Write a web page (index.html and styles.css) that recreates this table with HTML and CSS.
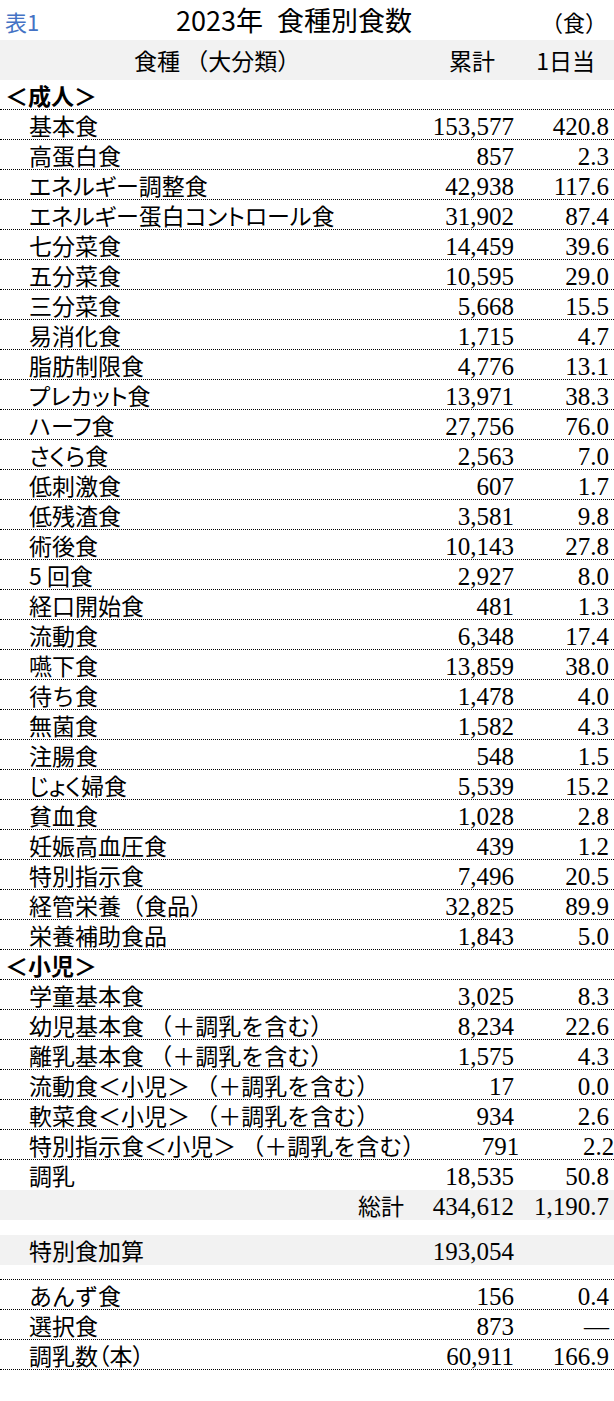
FILE: index.html
```html
<!DOCTYPE html>
<html lang="ja">
<head>
<meta charset="utf-8">
<title>2023年 食種別食数</title>
<link rel="stylesheet" href="styles.css">
</head>
<body>
<div class="sheet">
  <div class="titlebar">
    <span class="tag">表1</span>
    <span class="title">2023年 食種別食数</span>
    <span class="unit">（食）</span>
  </div>

  <div class="row head">
    <div class="name">食種 （大分類）</div>
    <div class="num h1">累計</div>
    <div class="num h2">1日当</div>
  </div>

  <div class="row cat"><div class="name">＜成人＞</div><div class="num"></div><div class="num"></div></div>
  <div class="row item"><div class="name">基本食</div><div class="num">153,577</div><div class="num">420.8</div></div>
  <div class="row item"><div class="name">高蛋白食</div><div class="num">857</div><div class="num">2.3</div></div>
  <div class="row item"><div class="name prop">エネルギー調整食</div><div class="num">42,938</div><div class="num">117.6</div></div>
  <div class="row item"><div class="name prop">エネルギー蛋白コントロール食</div><div class="num">31,902</div><div class="num">87.4</div></div>
  <div class="row item"><div class="name">七分菜食</div><div class="num">14,459</div><div class="num">39.6</div></div>
  <div class="row item"><div class="name">五分菜食</div><div class="num">10,595</div><div class="num">29.0</div></div>
  <div class="row item"><div class="name">三分菜食</div><div class="num">5,668</div><div class="num">15.5</div></div>
  <div class="row item"><div class="name">易消化食</div><div class="num">1,715</div><div class="num">4.7</div></div>
  <div class="row item"><div class="name">脂肪制限食</div><div class="num">4,776</div><div class="num">13.1</div></div>
  <div class="row item"><div class="name prop">プレカット食</div><div class="num">13,971</div><div class="num">38.3</div></div>
  <div class="row item"><div class="name prop">ハーフ食</div><div class="num">27,756</div><div class="num">76.0</div></div>
  <div class="row item"><div class="name prop">さくら食</div><div class="num">2,563</div><div class="num">7.0</div></div>
  <div class="row item"><div class="name">低刺激食</div><div class="num">607</div><div class="num">1.7</div></div>
  <div class="row item"><div class="name">低残渣食</div><div class="num">3,581</div><div class="num">9.8</div></div>
  <div class="row item"><div class="name">術後食</div><div class="num">10,143</div><div class="num">27.8</div></div>
  <div class="row item"><div class="name">5 回食</div><div class="num">2,927</div><div class="num">8.0</div></div>
  <div class="row item"><div class="name">経口開始食</div><div class="num">481</div><div class="num">1.3</div></div>
  <div class="row item"><div class="name">流動食</div><div class="num">6,348</div><div class="num">17.4</div></div>
  <div class="row item"><div class="name">嚥下食</div><div class="num">13,859</div><div class="num">38.0</div></div>
  <div class="row item"><div class="name">待ち食</div><div class="num">1,478</div><div class="num">4.0</div></div>
  <div class="row item"><div class="name">無菌食</div><div class="num">1,582</div><div class="num">4.3</div></div>
  <div class="row item"><div class="name">注腸食</div><div class="num">548</div><div class="num">1.5</div></div>
  <div class="row item"><div class="name prop">じょく婦食</div><div class="num">5,539</div><div class="num">15.2</div></div>
  <div class="row item"><div class="name">貧血食</div><div class="num">1,028</div><div class="num">2.8</div></div>
  <div class="row item"><div class="name">妊娠高血圧食</div><div class="num">439</div><div class="num">1.2</div></div>
  <div class="row item"><div class="name">特別指示食</div><div class="num">7,496</div><div class="num">20.5</div></div>
  <div class="row item"><div class="name">経管栄養（食品）</div><div class="num">32,825</div><div class="num">89.9</div></div>
  <div class="row item"><div class="name">栄養補助食品</div><div class="num">1,843</div><div class="num">5.0</div></div>

  <div class="row cat"><div class="name">＜小児＞</div><div class="num"></div><div class="num"></div></div>
  <div class="row item"><div class="name">学童基本食</div><div class="num">3,025</div><div class="num">8.3</div></div>
  <div class="row item"><div class="name">幼児基本食 （＋調乳を含む）</div><div class="num">8,234</div><div class="num">22.6</div></div>
  <div class="row item"><div class="name">離乳基本食 （＋調乳を含む）</div><div class="num">1,575</div><div class="num">4.3</div></div>
  <div class="row item"><div class="name">流動食＜小児＞ （＋調乳を含む）</div><div class="num">17</div><div class="num">0.0</div></div>
  <div class="row item"><div class="name">軟菜食＜小児＞ （＋調乳を含む）</div><div class="num">934</div><div class="num">2.6</div></div>
  <div class="row item"><div class="name">特別指示食＜小児＞ （＋調乳を含む）</div><div class="num">791</div><div class="num">2.2</div></div>
  <div class="row item last"><div class="name">調乳</div><div class="num">18,535</div><div class="num">50.8</div></div>

  <div class="row band total"><div class="name">総計</div><div class="num">434,612</div><div class="num">1,190.7</div></div>
  <div class="gap"></div>
  <div class="row band"><div class="name">特別食加算</div><div class="num">193,054</div><div class="num"></div></div>
  <div class="gap dotted"></div>
  <div class="row item"><div class="name">あんず食</div><div class="num">156</div><div class="num">0.4</div></div>
  <div class="row item"><div class="name">選択食</div><div class="num">873</div><div class="num">—</div></div>
  <div class="row item"><div class="name prop">調乳数（本）</div><div class="num">60,911</div><div class="num">166.9</div></div>
</div>
</body>
</html>
```

FILE: styles.css
```css
html, body {
  margin: 0;
  padding: 0;
  background: #ffffff;
}

body {
  font-family: "Noto Sans CJK JP", "Noto Sans", sans-serif;
  color: #000;
}

.sheet {
  width: 614px;
}

.titlebar {
  display: grid;
  grid-template-columns: 176px 1fr auto;
  align-items: baseline;
  height: 40px;
  line-height: 40px;
}

.tag {
  padding-left: 5px;
  font-size: 22px;
  color: #4472c4;
}

.title {
  font-size: 27px;
  word-spacing: 8px;
}

.unit {
  font-size: 22px;
  padding-right: 7px;
}

.row {
  display: grid;
  grid-template-columns: 1fr 94px 95px;
  padding-right: 5px;
  box-sizing: border-box;
  height: 30px;
  line-height: 30px;
  align-items: baseline;
  font-size: 23px;
}

.row .num {
  text-align: right;
  font-family: "Liberation Serif", "Times New Roman", serif;
  font-size: 25px;
  white-space: nowrap;
}

.row .name {
  white-space: nowrap;
}

.row .name.prop {
  font-feature-settings: "palt";
}

.head {
  height: 40px;
  line-height: 40px;
  background: #f2f2f2;
}

.head .name {
  padding-left: 134px;
}

.head .num {
  font-family: "Noto Sans CJK JP", "Noto Sans", sans-serif;
  font-size: 23px;
}

.head .h1 {
  padding-right: 19px;
}

.head .h2 {
  padding-right: 14px;
}

.cat,
.item {
  border-bottom: 1px dotted #000;
}

.cat .name {
  padding-left: 5px;
  font-weight: bold;
}

.item .name {
  padding-left: 29px;
}

.item.last {
  border-bottom: none;
}

.band {
  background: #f2f2f2;
}

.band .name {
  padding-left: 29px;
}

.total .name {
  text-align: right;
  padding-right: 16px;
}

.gap {
  height: 15px;
  box-sizing: border-box;
}

.gap.dotted {
  border-bottom: 1px dotted #000;
}
```
